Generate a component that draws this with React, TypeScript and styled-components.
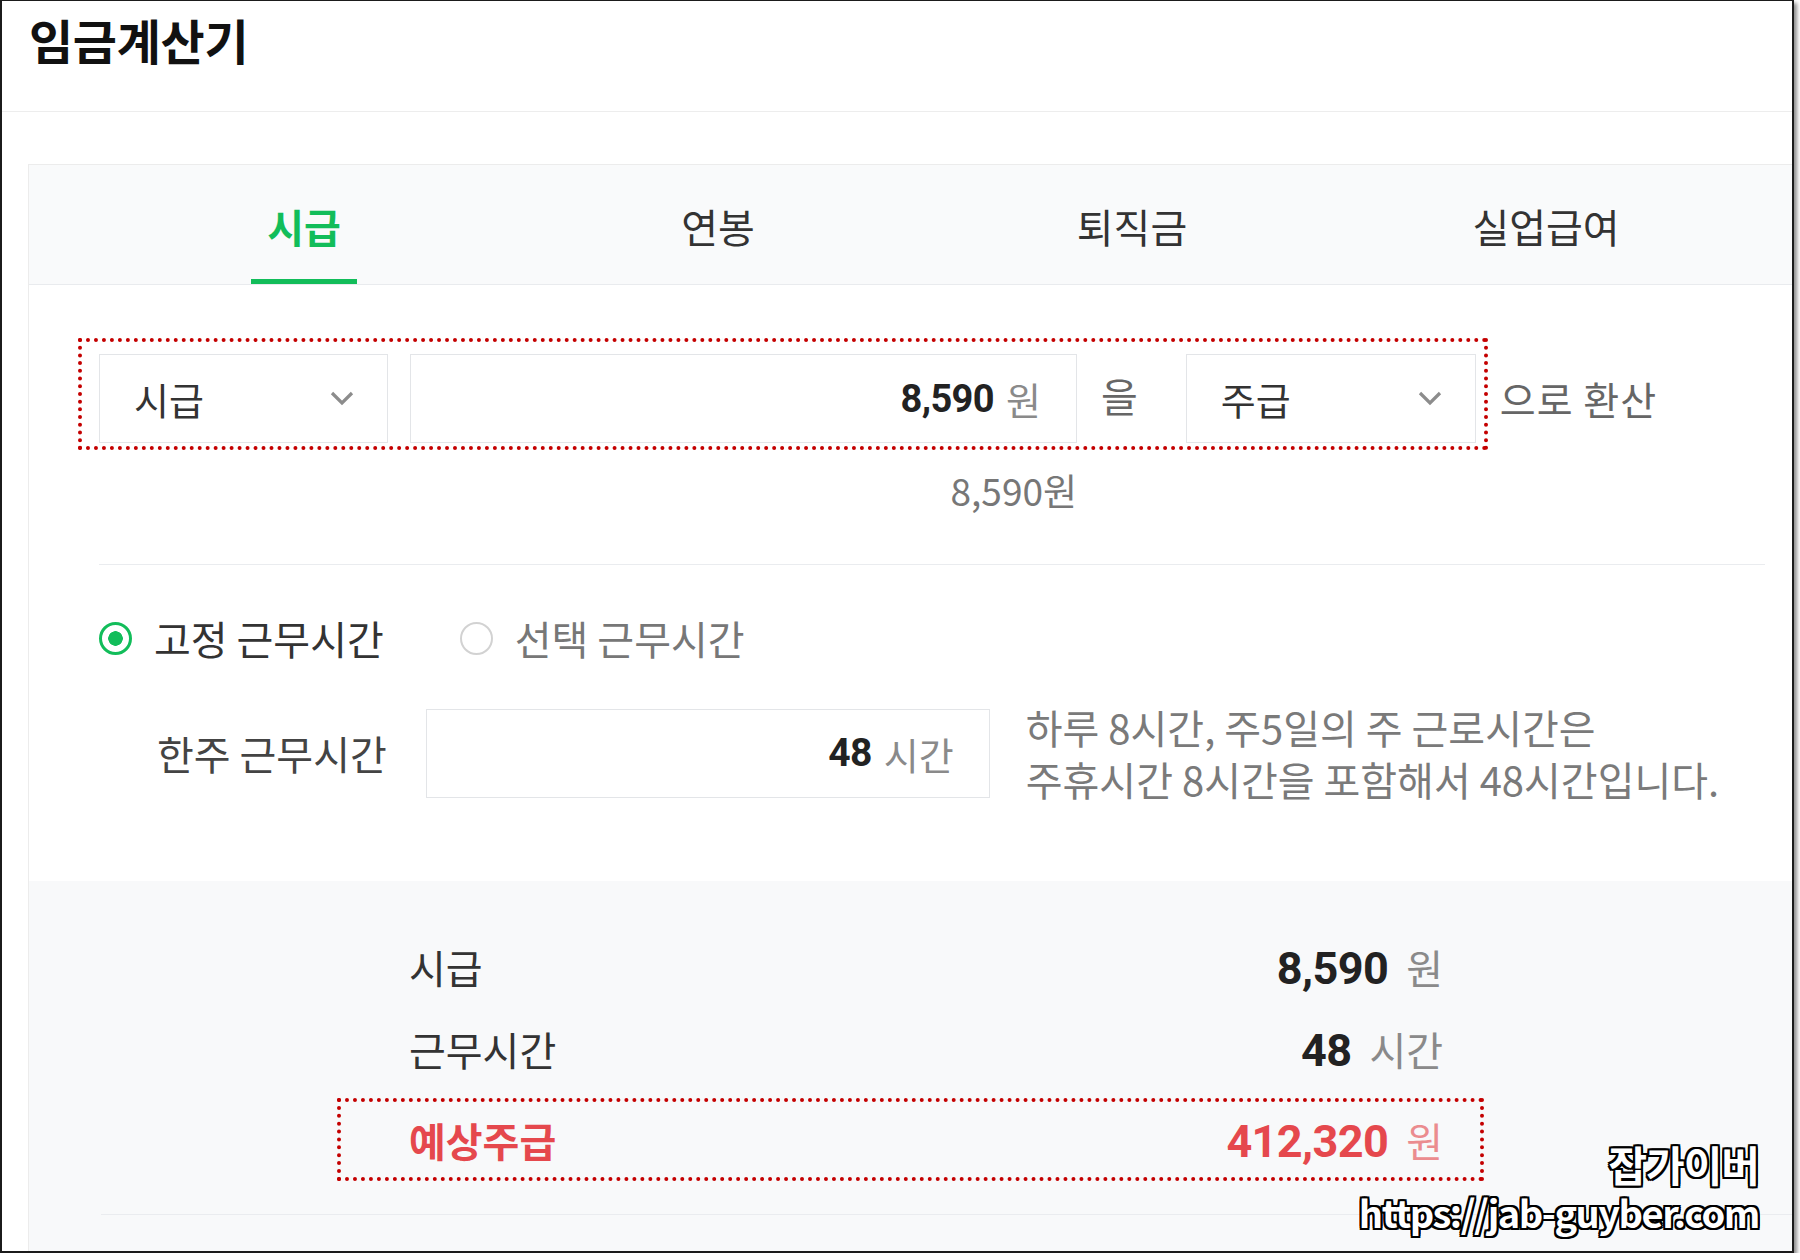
import React from "react";
import styled, { createGlobalStyle } from "styled-components";

const KR = `"Noto Sans CJK KR", "Noto Sans", sans-serif`;
const NUM = `Roboto, "Noto Sans CJK KR", sans-serif`;
const GREEN = "#12bd5a";
const RED = "#e5484d";
const DOT_RED = "#c40000";

const Global = createGlobalStyle`
  html, body { margin: 0; padding: 0; background: #fff; }
  body { font-family: ${KR}; color: #333; }
  * { box-sizing: border-box; }
`;

const Frame = styled.div`
  position: relative;
  width: 1794px;
  height: 1253px;
  border: 2px solid #1b1b1b;
  border-top-width: 1px;
  box-shadow: 3px 3px 4px rgba(0, 0, 0, 0.45);
  overflow: hidden;
  background: #fff;
`;

const Header = styled.header`
  height: 111px;
  border-bottom: 1px solid #ededed;
  padding: 8px 0 0 27px;
`;

const Title = styled.h1`
  margin: 0;
  font-family: ${KR};
  font-size: 48px;
  font-weight: 700;
  line-height: 60px;
  color: #111;
  letter-spacing: -0.3px;
`;

const Panel = styled.section`
  margin: 52px 0 0 26px;
  width: 1800px;
  border-top: 1px solid #ececec;
  border-left: 1px solid #ececec;
`;

const TabList = styled.nav`
  display: grid;
  grid-template-columns: repeat(4, 414px);
  height: 120px;
  padding-left: 68px;
  background: #f9fafb;
  border-bottom: 1px solid #e9ebee;
`;

const Tab = styled.div`
  display: flex;
  justify-content: center;
  align-items: flex-end;
`;

const TabLabel = styled.span<{ $active?: boolean }>`
  display: block;
  padding: 0 16px 29px;
  font-size: 40px;
  line-height: 48px;
  font-weight: ${(p) => (p.$active ? 700 : 400)};
  color: ${(p) => (p.$active ? GREEN : "#333")};
  border-bottom: 5px solid ${(p) => (p.$active ? GREEN : "transparent")};
`;

const FormBody = styled.div`
  padding: 0 63px 0 70px;
`;

const ConvertRow = styled.div`
  display: flex;
  align-items: flex-start;
  margin: 53px 0 0 -21px;
`;

const Highlight = styled.div`
  display: flex;
  align-items: center;
  border: 4px dotted ${DOT_RED};
  padding: 12px 8px 3px 17px;
`;

const SelectBox = styled.div<{ $w: number }>`
  width: ${(p) => p.$w}px;
  height: 89px;
  display: flex;
  align-items: center;
  justify-content: space-between;
  padding: 0 33px 0 34px;
  border: 1px solid #e3e5e8;
  background: #fff;
  font-size: 38px;
  color: #333;
`;

const Field = styled.div<{ $w: number }>`
  width: ${(p) => p.$w}px;
  height: 89px;
  display: flex;
  align-items: center;
  justify-content: flex-end;
  padding-right: 35px;
  border: 1px solid #e3e5e8;
  background: #fff;
`;

const AmountField = styled(Field)`
  margin-left: 22px;
`;

const Num = styled.span<{ $size: number; $color?: string }>`
  font-family: ${NUM};
  font-weight: 700;
  font-size: ${(p) => p.$size}px;
  color: ${(p) => p.$color || "#222"};
  letter-spacing: -0.6px;
`;

const Unit = styled.span<{ $color?: string; $gap?: number; $size?: number }>`
  font-size: ${(p) => p.$size ?? 38}px;
  color: ${(p) => p.$color || "#8a8a8a"};
  margin-left: ${(p) => p.$gap ?? 12}px;
`;

const Particle = styled.span`
  margin: -8px 48px 0 24px;
  font-size: 40px;
  color: #666;
`;

const AfterText = styled.span`
  margin: 16px 0 0 12px;
  height: 89px;
  line-height: 89px;
  font-size: 39px;
  color: #666;
  letter-spacing: 1px;
`;

const SubAmount = styled.div`
  width: 978px;
  margin-top: 18px;
  text-align: right;
  font-size: 37px;
  line-height: 44px;
  color: #777;
`;

const Divider = styled.hr<{ $mt: number; $ml?: number }>`
  margin: ${(p) => p.$mt}px 0 0 ${(p) => p.$ml ?? 0}px;
  border: 0;
  height: 1px;
  background: #eaecef;
`;

const RadioRow = styled.div`
  display: flex;
  align-items: center;
  height: 46px;
  margin-top: 50px;
`;

const Option = styled.label<{ $muted?: boolean }>`
  display: flex;
  align-items: center;
  gap: 22px;
  margin-right: 76px;
  font-size: 40px;
  color: ${(p) => (p.$muted ? "#777" : "#333")};
`;

const RadioMark = styled.span<{ $checked?: boolean }>`
  width: 33px;
  height: 33px;
  border-radius: 50%;
  border: ${(p) => (p.$checked ? `3px solid ${GREEN}` : "2px solid #d2d2d2")};
  background: ${(p) =>
    p.$checked ? `radial-gradient(circle, ${GREEN} 0 7px, #fff 7.5px)` : "#fff"};
`;

const HoursRow = styled.div`
  display: flex;
  align-items: center;
  margin-top: 40px;
  padding-left: 58px;
`;

const HoursLabel = styled.span`
  margin-right: 39px;
  font-size: 40px;
  color: #444;
`;

const Help = styled.p`
  margin: 0 0 0 36px;
  font-size: 40px;
  line-height: 52px;
  color: #7a7a7a;
`;

const ResultSection = styled.div`
  margin-top: 76px;
  height: 400px;
  background: #f8f9fa;
  padding-top: 45px;
`;

const ResultList = styled.div`
  width: 1147px;
  margin-left: 308px;
`;

const ResultRow = styled.div<{ $hl?: boolean }>`
  display: flex;
  align-items: center;
  justify-content: space-between;
  height: ${(p) => (p.$hl ? 83 : 82)}px;
  margin-top: ${(p) => (p.$hl ? 8 : 0)}px;
  padding: ${(p) => (p.$hl ? "0 37px 0 68px" : "0 41px 0 72px")};
  border: ${(p) => (p.$hl ? `4px dotted ${DOT_RED}` : "0")};
`;

const ResultLabel = styled.span<{ $hl?: boolean }>`
  font-size: 40px;
  font-weight: ${(p) => (p.$hl ? 700 : 400)};
  color: ${(p) => (p.$hl ? RED : "#333")};
`;

const Watermark = styled.div`
  position: absolute;
  right: 33px;
  bottom: 16px;
  display: flex;
  flex-direction: column;
  align-items: flex-end;
  gap: 2px;
  color: #fff;
  font-family: ${KR};
  font-weight: 700;
  text-shadow: -2px -2px 0 #000, 2px -2px 0 #000, -2px 2px 0 #000, 2px 2px 0 #000,
    0 -2px 0 #000, 0 2px 0 #000, -2px 0 0 #000, 2px 0 0 #000;
`;

const WmName = styled.span`
  font-size: 42px;
  line-height: 46px;
  letter-spacing: -1px;
`;

const WmUrl = styled.span`
  font-size: 38px;
  line-height: 46px;
  letter-spacing: -1.5px;
`;

const Chevron = () => (
  <svg width="24" height="15" viewBox="0 0 24 15">
    <polyline points="2,2 12,12 22,2" fill="none" stroke="#8c8c8c" strokeWidth="3.2" />
  </svg>
);

export default function App() {
  const tabs = ["시급", "연봉", "퇴직금", "실업급여"];
  return (
    <>
      <Global />
      <Frame>
        <Header>
          <Title>임금계산기</Title>
        </Header>
        <Panel>
          <TabList>
            {tabs.map((t, i) => (
              <Tab key={t}>
                <TabLabel $active={i === 0}>{t}</TabLabel>
              </Tab>
            ))}
          </TabList>
          <FormBody>
            <ConvertRow>
              <Highlight>
                <SelectBox $w={289}>
                  <span>시급</span>
                  <Chevron />
                </SelectBox>
                <AmountField $w={667}>
                  <Num $size={38}>8,590</Num>
                  <Unit>원</Unit>
                </AmountField>
                <Particle>을</Particle>
                <SelectBox $w={290}>
                  <span>주급</span>
                  <Chevron />
                </SelectBox>
              </Highlight>
              <AfterText>으로 환산</AfterText>
            </ConvertRow>
            <SubAmount>8,590원</SubAmount>
            <Divider $mt={52} />
            <RadioRow>
              <Option>
                <RadioMark $checked />
                고정 근무시간
              </Option>
              <Option $muted>
                <RadioMark />
                선택 근무시간
              </Option>
            </RadioRow>
            <HoursRow>
              <HoursLabel>한주 근무시간</HoursLabel>
              <Field $w={564}>
                <Num $size={39}>48</Num>
                <Unit>시간</Unit>
              </Field>
              <Help>
                하루 8시간, 주5일의 주 근로시간은
                <br />
                주휴시간 8시간을 포함해서 48시간입니다.
              </Help>
            </HoursRow>
          </FormBody>
          <ResultSection>
            <ResultList>
              <ResultRow>
                <ResultLabel>시급</ResultLabel>
                <span>
                  <Num $size={45}>8,590</Num>
                  <Unit $gap={18} $size={40}>원</Unit>
                </span>
              </ResultRow>
              <ResultRow>
                <ResultLabel>근무시간</ResultLabel>
                <span>
                  <Num $size={45}>48</Num>
                  <Unit $gap={18} $size={40}>시간</Unit>
                </span>
              </ResultRow>
              <ResultRow $hl>
                <ResultLabel $hl>예상주급</ResultLabel>
                <span>
                  <Num $size={45} $color={RED}>
                    412,320
                  </Num>
                  <Unit $gap={18} $size={40} $color="#eb8c8f">
                    원
                  </Unit>
                </span>
              </ResultRow>
            </ResultList>
            <Divider $mt={33} $ml={72} />
          </ResultSection>
        </Panel>
        <Watermark>
          <WmName>잡가이버</WmName>
          <WmUrl>https://jab-guyber.com</WmUrl>
        </Watermark>
      </Frame>
    </>
  );
}
